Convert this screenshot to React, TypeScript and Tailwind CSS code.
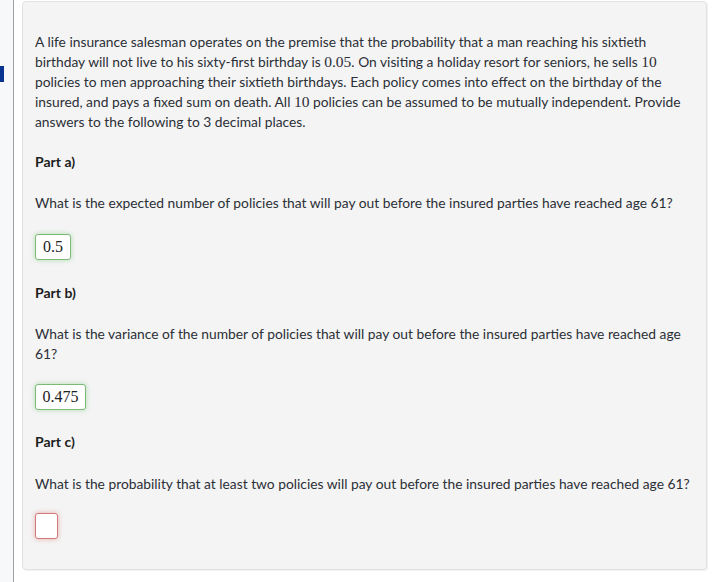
import React from 'react';

const M = ({ children }: { children: React.ReactNode }) => (
    <span className="font-['Liberation_Serif',serif] text-[15.5px] leading-[18px]">{children}</span>
);

const AnswerBox = ({ value, width, ok }: { value?: string; width: string; ok: boolean }) => (
    <div
        className={`${width} h-[26px] flex items-center justify-center bg-white rounded-[3px] border font-['Liberation_Serif',serif] text-[16px] text-[#222] ${
            ok
                ? 'border-[#7dba77] shadow-[0_0_5px_rgba(92,184,92,0.45)]'
                : 'border-[#d27a7a] shadow-[0_0_5px_rgba(217,83,79,0.45)]'
        }`}
    >
        {value}
    </div>
);

const PartHeading = ({ label }: { label: string }) => (
    <h3 className="font-bold text-[14px] leading-[20px] text-[#1d1d1d]">{label}</h3>
);

const App = () => {
    return (
        <div className="flex min-h-[582px] bg-white font-['Lato',sans-serif] text-[13.8px] leading-[20px] text-[#2b2f36]">
            {/* side rail */}
            <div className="w-[14px] shrink-0 bg-[#f7f8fa] border-r border-[#a3a3a3] pt-[66px]">
                <div className="w-[4px] h-[16px] bg-[#0a3492]" />
            </div>

            {/* question panel */}
            <div className="pl-[8px] pt-[1px]">
                <div className="w-[685px] h-[569px] bg-[#f4f4f4] border border-[#e2e2e2] rounded-[4px] shadow-[1px_1px_1px_rgba(0,0,0,0.06)] pl-[12px] pt-[30px] flex flex-col">
                    <p className="w-[660px]">
                        A life insurance salesman operates on the premise that the probability that a man reaching his sixtieth
                        birthday will not live to his sixty-first birthday is <M>0.05</M>. On visiting a holiday resort for seniors, he sells <M>10</M> policies to men approaching their sixtieth birthdays. Each policy comes into effect on the birthday of the
                        insured, and pays a fixed sum on death. All <M>10</M> policies can be assumed to be mutually independent. Provide
                        answers to the following to 3 decimal places.
                    </p>

                    <div className="mt-[20px]">
                        <PartHeading label="Part a)" />
                    </div>
                    <p className="mt-[21px] w-[660px]">
                        What is the expected number of policies that will pay out before the insured parties have reached age 61?
                    </p>
                    <div className="mt-[21px]">
                        <AnswerBox value="0.5" width="w-[36px]" ok />
                    </div>

                    <div className="mt-[23px]">
                        <PartHeading label="Part b)" />
                    </div>
                    <p className="mt-[21px] w-[660px]">
                        What is the variance of the number of policies that will pay out before the insured parties have reached age 61?
                    </p>
                    <div className="mt-[20px]">
                        <AnswerBox value="0.475" width="w-[51px]" ok />
                    </div>

                    <div className="mt-[22px]">
                        <PartHeading label="Part c)" />
                    </div>
                    <p className="mt-[22px] w-[660px]">
                        What is the probability that at least two policies will pay out before the insured parties have reached age 61?
                    </p>
                    <div className="mt-[19px]">
                        <AnswerBox width="w-[23px]" ok={false} />
                    </div>
                </div>
            </div>
        </div>
    );
};

export default App;
